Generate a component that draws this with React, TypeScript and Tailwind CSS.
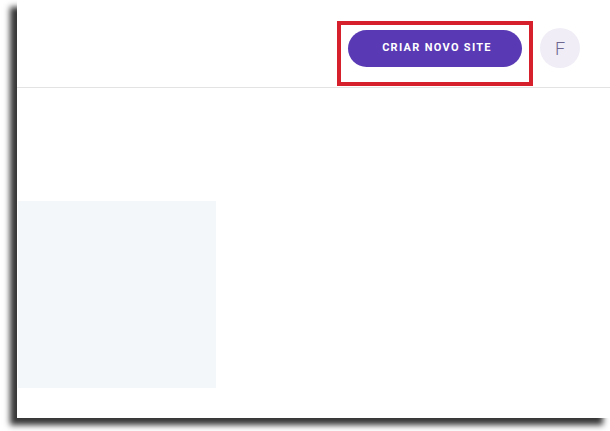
export default function App() {
  return (
    <div className="h-[431px] w-[610px] overflow-hidden bg-white font-['Roboto',sans-serif]">
      {/* Janela com sombra */}
      <div className="ml-[17px] flex h-[418px] flex-col bg-white shadow-[-7px_7px_6px_#363636]">
        {/* Header */}
        <header className="flex h-[88px] items-start justify-end border-b border-[#e3e3e3] pr-[30px] pt-[21px]">
          <div className="flex items-start gap-[7px]">
            <div className="border-[4px] border-[#d6212c] px-[7px] pb-[15px] pt-[5px]">
              <button className="flex h-[37px] w-[174px] items-center justify-center rounded-full bg-[#593ab4] pl-[4px] text-[11px] font-bold tracking-[1.3px] text-white">
                CRIAR NOVO SITE
              </button>
            </div>
            <div className="mt-[7px] flex h-[40px] w-[40px] items-center justify-center rounded-full bg-[#f0edf6] text-[18px] font-light text-[#6d6690]">
              F
            </div>
          </div>
        </header>

        {/* Conteúdo */}
        <div className="flex-1 pt-[113px]">
          <div className="ml-[1px] h-[187px] w-[198px] bg-[#f3f7f9]" />
        </div>
      </div>
    </div>
  );
}
